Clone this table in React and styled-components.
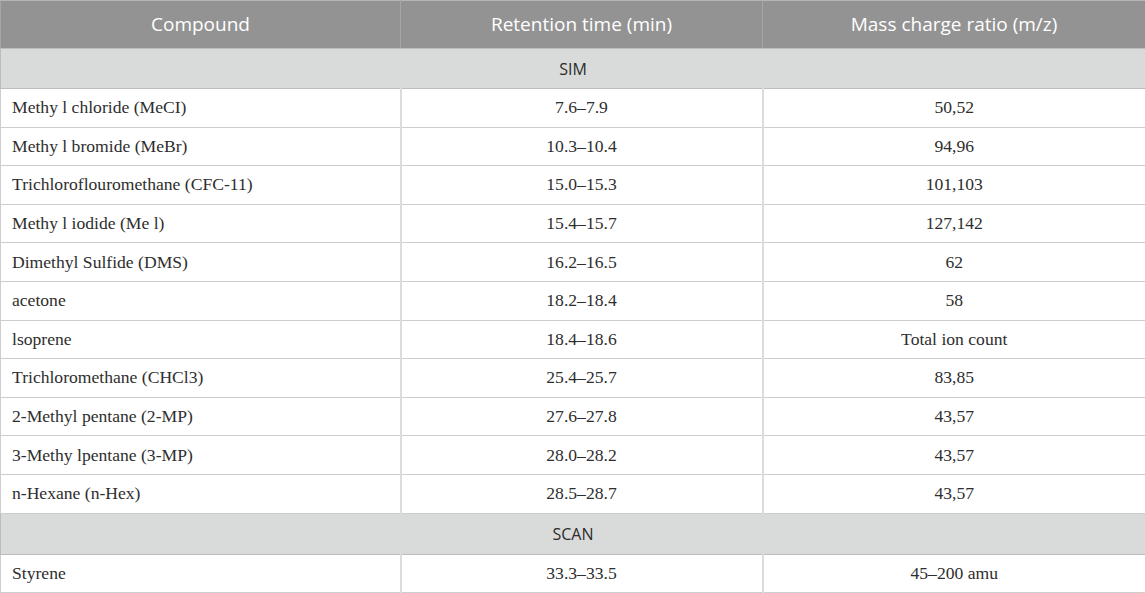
import React from "react";
import styled, { createGlobalStyle } from "styled-components";

const Global = createGlobalStyle`
  html, body { margin: 0; padding: 0; background: #ffffff; }
  #root { width: 1145px; }
`;

const Table = styled.table`
  width: 1145px;
  border-collapse: collapse;
  table-layout: fixed;
`;

const HeadCell = styled.th`
  height: 46px;
  padding: 0 0 1px;
  background: #939393;
  color: #ffffff;
  font-family: "Open Sans", "Noto Sans", sans-serif;
  font-weight: 400;
  font-size: 19px;
  text-align: center;
  border-top: 1px solid #b5b5b5;
  border-left: 1px solid #a6a6a6;
  border-right: 1px solid #a6a6a6;
  border-bottom: 1px solid #bdbdbd;
`;

const SectionCell = styled.td`
  height: ${(p) => p.$h}px;
  padding: 0;
  background: #d9dbda;
  color: #2b2b2b;
  font-family: "Open Sans", "Noto Sans", sans-serif;
  font-size: 16px;
  text-align: center;
  border: 1px solid #bcbcbc;
`;

const Cell = styled.td`
  height: ${(p) => p.$h}px;
  padding: 0 11px;
  color: #2e2e2e;
  font-family: "Liberation Serif", "Times New Roman", serif;
  font-size: 17.6px;
  text-align: ${(p) => (p.$center ? "center" : "left")};
  border: 1px solid #cdcdcd;
  border-left: ${(p) => (p.$first ? "1px solid #cdcdcd" : "2px solid #dcdcdc")};
  white-space: nowrap;
`;

const rows = [
  ["Methy l chloride (MeCI)", "7.6\u20137.9", "50,52"],
  ["Methy l bromide (MeBr)", "10.3\u201310.4", "94,96"],
  ["Trichloroflouromethane (CFC-11)", "15.0\u201315.3", "101,103"],
  ["Methy l iodide (Me l)", "15.4\u201315.7", "127,142"],
  ["Dimethyl Sulfide (DMS)", "16.2\u201316.5", "62"],
  ["acetone", "18.2\u201318.4", "58"],
  ["lsoprene", "18.4\u201318.6", "Total ion count"],
  ["Trichloromethane (CHCl3)", "25.4\u201325.7", "83,85"],
  ["2-Methyl pentane (2-MP)", "27.6\u201327.8", "43,57"],
  ["3-Methy lpentane (3-MP)", "28.0\u201328.2", "43,57"],
  ["n-Hexane (n-Hex)", "28.5\u201328.7", "43,57"],
];

function DataRow({ r, h }) {
  return (
    <tr>
      <Cell $h={h} $first>{r[0]}</Cell>
      <Cell $h={h} $center>{r[1]}</Cell>
      <Cell $h={h} $center>{r[2]}</Cell>
    </tr>
  );
}

export default function App() {
  return (
    <>
      <Global />
      <Table>
        <colgroup>
          <col style={{ width: 400 }} />
          <col style={{ width: 362 }} />
          <col style={{ width: 383 }} />
        </colgroup>
        <thead>
          <tr>
            <HeadCell>Compound</HeadCell>
            <HeadCell>Retention time (min)</HeadCell>
            <HeadCell>Mass charge ratio (m/z)</HeadCell>
          </tr>
        </thead>
        <tbody>
          <tr>
            <SectionCell colSpan={3} $h={39}>SIM</SectionCell>
          </tr>
          {rows.map((r, i) => (
            <DataRow key={i} r={r} h={37.6} />
          ))}
          <tr>
            <SectionCell colSpan={3} $h={40}>SCAN</SectionCell>
          </tr>
          <DataRow r={["Styrene", "33.3\u201333.5", "45\u2013200 amu"]} h={37} />
        </tbody>
      </Table>
    </>
  );
}
